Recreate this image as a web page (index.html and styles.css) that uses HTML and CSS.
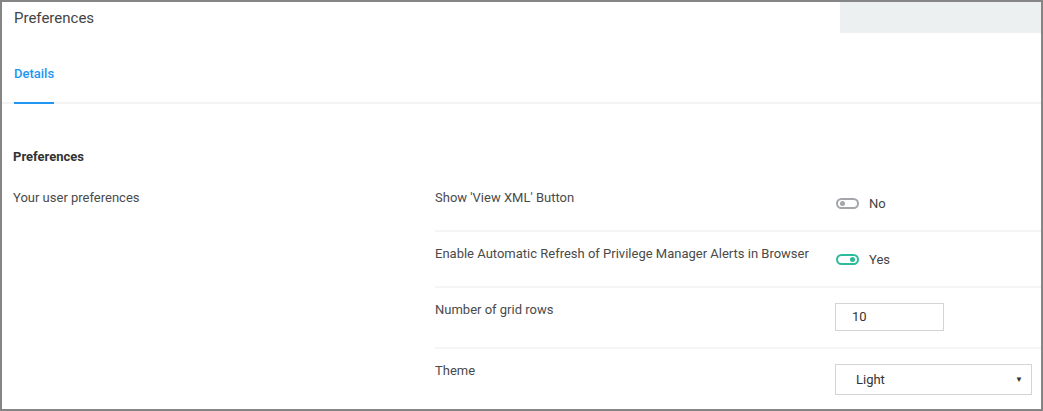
FILE: index.html
```html
<!DOCTYPE html>
<html>
<head>
<meta charset="utf-8">
<link rel="stylesheet" href="styles.css">
</head>
<body>
<div class="frame">
  <header class="header">
    <h1 class="title">Preferences</h1>
    <div class="header-aside"></div>
  </header>
  <nav class="tabs">
    <span class="tab active">Details</span>
  </nav>
  <section class="section">
    <h2 class="section-title">Preferences</h2>
    <div class="section-body">
      <div class="section-desc">Your user preferences</div>
      <div class="fields">
        <div class="row">
          <div class="label">Show 'View XML' Button</div>
          <div class="control">
            <span class="toggle off"><span class="knob"></span></span>
            <span class="toggle-text">No</span>
          </div>
        </div>
        <div class="row">
          <div class="label">Enable Automatic Refresh of Privilege Manager Alerts in Browser</div>
          <div class="control">
            <span class="toggle on"><span class="knob"></span></span>
            <span class="toggle-text">Yes</span>
          </div>
        </div>
        <div class="row">
          <div class="label">Number of grid rows</div>
          <div class="control control-input">
            <div class="input">10</div>
          </div>
        </div>
        <div class="row last">
          <div class="label">Theme</div>
          <div class="control control-select">
            <div class="select"><span>Light</span><span class="arrow">&#9660;</span></div>
          </div>
        </div>
      </div>
    </div>
  </section>
</div>
</body>
</html>
```
FILE: styles.css
```css
* { box-sizing: border-box; }
html, body { margin: 0; padding: 0; background: #fff; }
body { font-family: Roboto, "Noto Sans", Arial, sans-serif; color: #4a4a4a; }
.frame {
  width: 1043px;
  height: 411px;
  border: 2px solid #858585;
  overflow: hidden;
}
.header {
  display: flex;
  justify-content: space-between;
  height: 31px;
}
.title {
  margin: 0;
  padding: 6px 0 0 12px;
  font-size: 15px;
  font-weight: 400;
  color: #444;
  line-height: 20px;
}
.header-aside {
  width: 201px;
  height: 31px;
  background: #ecf0f0;
}
.tabs {
  display: flex;
  padding: 0 0 0 12px;
  margin-top: 32px;
  border-bottom: 2px solid #f3f3f3;
}
.tab {
  font-size: 13px;
  line-height: 18px;
  font-weight: 500;
}
.tab.active {
  color: #2196f3;
  margin-bottom: -2px;
  padding-bottom: 21px;
  box-shadow: inset 0 -2px 0 #2196f3;
}
.section { padding: 44px 0 0 11px; }
.section-title {
  margin: 0;
  font-size: 13px;
  font-weight: 700;
  color: #333;
  line-height: 18px;
}
.section-body {
  display: flex;
  margin-top: 10px;
}
.section-desc {
  width: 422px;
  font-size: 13px;
  line-height: 18px;
  padding-top: 13px;
}
.fields { flex: 1; }
.row {
  display: flex;
  padding: 13px 0 15px;
  border-bottom: 2px solid #f5f5f5;
}
.row.last { border-bottom: 0; }
.label {
  width: 400px;
  font-size: 13px;
  line-height: 18px;
}
.control {
  display: flex;
  align-items: center;
  margin-top: 2px;
  height: 24px;
}
.control-input { height: 28px; margin-bottom: 1px; }
.control-select { height: 31px; }
.toggle {
  position: relative;
  width: 23px;
  height: 11px;
  border: 2px solid #a3a7ab;
  border-radius: 6px;
  margin-left: 1px;
}
.toggle .knob {
  position: absolute;
  top: 1.5px;
  left: 2px;
  width: 5px;
  height: 5px;
  border-radius: 50%;
  background: #a3a7ab;
}
.toggle.on { border-color: #2bbb9a; }
.toggle.on .knob { left: auto; right: 2px; background: #2bbb9a; }
.toggle-text {
  margin-left: 10px;
  font-size: 13px;
  color: #444;
}
.input {
  width: 109px;
  height: 28px;
  border: 1px solid #d4d4d4;
  padding-left: 16px;
  font-size: 13px;
  line-height: 26px;
  color: #333;
}
.select {
  display: flex;
  justify-content: space-between;
  align-items: center;
  width: 197px;
  height: 31px;
  border: 1px solid #d4d4d4;
  padding: 0 8px 0 20px;
  font-size: 13px;
  color: #333;
}
.select .arrow { font-size: 8px; color: #333; }
```
